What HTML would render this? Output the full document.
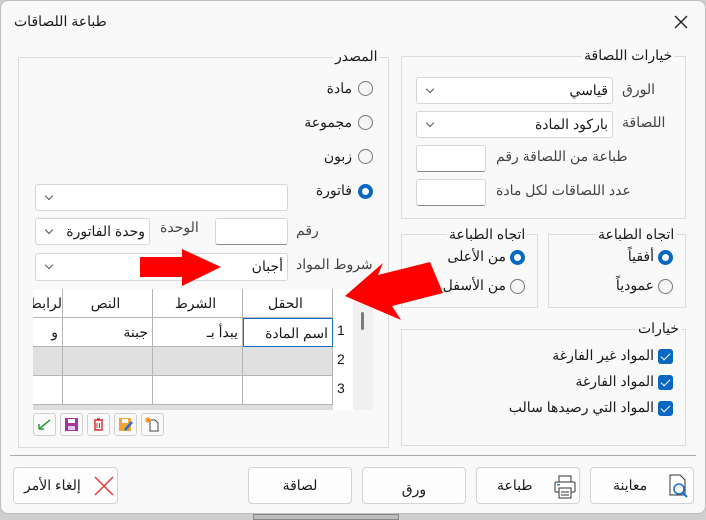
<!DOCTYPE html>
<html><head><meta charset="utf-8"><style>
*{box-sizing:border-box;margin:0;padding:0}
body{width:706px;height:520px;background:#cfcfcf;font-family:"Liberation Sans","Noto Sans CJK SC",sans-serif;font-size:14px;color:#1a1a1a;position:relative;overflow:hidden}
.dlg{position:absolute;left:0;top:0;width:706px;height:514px;background:#f9f9f9;border:1px solid #bdbdbd;border-radius:8px}
.a{position:absolute}
.grp{position:absolute;border:1px solid #dcdcdc}
.lg{position:absolute;background:#f9f9f9;padding:0 2px;direction:rtl;white-space:nowrap}
.t{position:absolute;direction:rtl;white-space:nowrap}
.box{position:absolute;background:#fff;border:1px solid #d6d6d6;border-bottom:1px solid #8a8a8a;border-radius:3px}
.cmb{position:absolute;background:#fff;border:1px solid #d6d6d6;border-radius:3px;direction:rtl;padding-right:4px;line-height:24px}
.cmb:after{content:"";position:absolute;left:10px;top:8px;width:5px;height:5px;border-right:1px solid #555;border-bottom:1px solid #555;transform:rotate(45deg)}
.rd{position:absolute;width:15px;height:15px;border:1px solid #777;border-radius:50%;background:#f5f5f5}
.rd.on{border:4px solid #0867c0;background:#fff}
.cb{position:absolute;width:15px;height:15px;background:#0867c0;border-radius:3px}
.cb:after{content:"";position:absolute;left:5px;top:2px;width:4px;height:8px;border-right:1.5px solid #fff;border-bottom:1.5px solid #fff;transform:rotate(45deg)}
.btn{position:absolute;background:#fdfdfd;border:1px solid #d3d3d3;border-radius:4px;top:467px;height:37px;text-align:center;line-height:35px}
.cell{position:absolute;border-right:1px solid #b5b5b5;border-bottom:1px solid #b5b5b5;direction:rtl;padding-right:4px;line-height:28px;overflow:hidden;white-space:nowrap}
.tb{position:absolute;top:413px;width:23px;height:23px;border:1px solid #cfcfcf;border-radius:3px;background:#fafafa}
</style></head><body>
<div class="dlg"></div>
<div class="t" style="left:14px;top:13px;font-size:14px">طباعة اللصاقات</div>
<svg class="a" style="left:673px;top:14px" width="16" height="16"><path d="M2 2L14 14M14 2L2 14" stroke="#222" stroke-width="1.4"/></svg>

<!-- left group -->
<div class="grp" style="left:18px;top:57px;width:371px;height:391px"></div>
<div class="lg" style="left:333px;top:48px">المصدر</div>
<div class="rd" style="left:358px;top:81px"></div><div class="t" style="right:354px;top:80px">مادة</div>
<div class="rd" style="left:358px;top:115px"></div><div class="t" style="right:354px;top:114px">مجموعة</div>
<div class="rd" style="left:358px;top:149px"></div><div class="t" style="right:354px;top:148px">زبون</div>
<div class="rd on" style="left:358px;top:184px"></div><div class="t" style="right:354px;top:182px">فاتورة</div>
<div class="cmb" style="left:35px;top:184px;width:253px;height:27px"></div>
<div class="cmb" style="left:35px;top:218px;width:115px;height:27px">وحدة الفاتورة</div>
<div class="t" style="left:160px;top:219px;color:#444">الوحدة</div>
<div class="box" style="left:215px;top:218px;width:73px;height:27px"></div>
<div class="t" style="left:296px;top:222px;color:#444">رقم</div>
<div class="cmb" style="left:35px;top:253px;width:253px;height:28px">أجبان</div>
<div class="t" style="left:296px;top:256px;color:#444">شروط المواد</div>

<!-- grid -->
<div class="a" style="left:33px;top:289px;width:340px;height:121px;background:#fff;overflow:hidden">
 <div class="a" style="left:320px;top:0;width:20px;height:121px;background:#f0f0f0"></div>
 <div class="a" style="left:328px;top:23px;width:3px;height:18px;background:#7a7a7a;border-radius:2px"></div>
 <div class="cell" style="left:0;top:0;width:30px;height:29px;text-align:right;padding-right:0">لرابط</div>
 <div class="cell" style="left:30px;top:0;width:90px;height:29px;text-align:center">النص</div>
 <div class="cell" style="left:120px;top:0;width:90px;height:29px;text-align:center">الشرط</div>
 <div class="cell" style="left:210px;top:0;width:90px;height:29px;text-align:center">الحقل</div>
 <div class="cell" style="left:0;top:29px;width:30px;height:29px">و</div>
 <div class="cell" style="left:30px;top:29px;width:90px;height:29px">جبنة</div>
 <div class="cell" style="left:120px;top:29px;width:90px;height:29px">يبدأ بـ</div>
 <div class="cell" style="left:210px;top:29px;width:90px;height:29px;border:1px solid #1a6fc4">اسم المادة</div>
 <div class="a" style="left:0;top:58px;width:300px;height:29px;background:#e0e0e0"></div>
 <div class="cell" style="left:0;top:58px;width:30px;height:29px"></div><div class="cell" style="left:30px;top:58px;width:90px;height:29px"></div><div class="cell" style="left:120px;top:58px;width:90px;height:29px"></div><div class="cell" style="left:210px;top:58px;width:90px;height:29px"></div>
 <div class="cell" style="left:0;top:87px;width:30px;height:29px"></div><div class="cell" style="left:30px;top:87px;width:90px;height:29px"></div><div class="cell" style="left:120px;top:87px;width:90px;height:29px"></div><div class="cell" style="left:210px;top:87px;width:90px;height:29px"></div>
 <div class="a" style="left:0;top:116px;width:300px;height:5px;background:#ddd"></div>
 <div class="a" style="left:304px;top:33px">1</div><div class="a" style="left:304px;top:62px">2</div><div class="a" style="left:304px;top:91px">3</div>
</div>
<div class="tb" style="left:33px"><svg width="21" height="21"><path d="M5 15L16 6M5 15V10M5 15H10" stroke="#2e9b3e" stroke-width="1.5" fill="none"/></svg></div>
<div class="tb" style="left:60px"><svg width="21" height="21"><rect x="4" y="4" width="13" height="13" fill="#a1399b"/><rect x="7" y="5" width="7" height="4" fill="#fff"/><rect x="7" y="12" width="7" height="4" fill="#e9c7e7"/></svg></div>
<div class="tb" style="left:87px"><svg width="21" height="21"><path d="M6 6H15M9 5H12M7 7V16H14V7" stroke="#d42a2a" stroke-width="1.4" fill="none"/><path d="M9 9V14M11.5 9V14" stroke="#d42a2a"/></svg></div>
<div class="tb" style="left:114px"><svg width="21" height="21"><rect x="4" y="4" width="12" height="13" fill="#f1a338"/><rect x="7" y="5" width="6" height="4" fill="#fff"/><path d="M10 16L17 8" stroke="#2a6fc4" stroke-width="2.5"/></svg></div>
<div class="tb" style="left:141px"><svg width="21" height="21"><path d="M8 6H13L16 9V17H8Z" stroke="#444" fill="#fff"/><path d="M6 3V9M3 6H9M4 4L8 8M8 4L4 8" stroke="#f08a00"/></svg></div>

<!-- right groups -->
<div class="grp" style="left:401px;top:56px;width:285px;height:163px"></div>
<div class="lg" style="left:582px;top:47px">خيارات اللصاقة</div>
<div class="cmb" style="left:416px;top:77px;width:197px;height:27px">قياسي</div>
<div class="t" style="left:622px;top:81px;color:#444">الورق</div>
<div class="cmb" style="left:416px;top:111px;width:197px;height:27px">باركود المادة</div>
<div class="t" style="left:622px;top:114px;color:#444">اللصاقة</div>
<div class="box" style="left:416px;top:145px;width:70px;height:27px"></div>
<div class="t" style="left:496px;top:148px;color:#444">طباعة من اللصاقة رقم</div>
<div class="box" style="left:416px;top:179px;width:70px;height:27px"></div>
<div class="t" style="left:496px;top:182px;color:#444">عدد اللصاقات لكل مادة</div>

<div class="grp" style="left:548px;top:234px;width:138px;height:74px"></div>
<div class="lg" style="left:596px;top:226px">اتجاه الطباعة</div>
<div class="rd on" style="left:658px;top:250px"></div><div class="t" style="right:52px;top:248px">أفقياً</div>
<div class="rd" style="left:658px;top:279px"></div><div class="t" style="right:52px;top:277px">عمودياً</div>

<div class="grp" style="left:401px;top:234px;width:137px;height:74px"></div>
<div class="lg" style="left:447px;top:226px">اتجاه الطباعة</div>
<div class="rd on" style="left:510px;top:250px"></div><div class="t" style="right:200px;top:248px">من الأعلى</div>
<div class="rd" style="left:510px;top:279px"></div><div class="t" style="right:200px;top:277px">من الأسفل</div>

<div class="grp" style="left:401px;top:329px;width:285px;height:117px"></div>
<div class="lg" style="left:636px;top:320px">خيارات</div>
<div class="cb" style="left:658px;top:349px"></div><div class="t" style="right:52px;top:347px">المواد غير الفارغة</div>
<div class="cb" style="left:658px;top:375px"></div><div class="t" style="right:52px;top:373px">المواد الفارغة</div>
<div class="cb" style="left:658px;top:401px"></div><div class="t" style="right:52px;top:399px">المواد التي رصيدها سالب</div>

<!-- arrows -->
<svg class="a" style="left:0;top:0" width="706" height="520"><polygon points="140,257 182,257 182,249 221,267 182,286 182,277 140,277" fill="#f00"/><polygon points="345,296 383,263 378,275 430,262 443,293 392,306 401,320" fill="#f00"/></svg>

<div class="a" style="left:10px;top:455px;width:686px;height:1px;background:#a8a8a8"></div>
<div class="btn" style="left:13px;width:105px;text-align:left;padding-left:10px">إلغاء الأمر<svg class="a" style="left:80px;top:8px" width="20" height="20"><path d="M1 1L19 19M19 1L1 19" stroke="#e03c3c" stroke-width="1.5"/></svg></div>
<div class="btn" style="left:248px;width:104px">لصاقة</div>
<div class="btn" style="left:362px;width:104px;line-height:42px">ورق</div>
<div class="btn" style="left:476px;width:104px;text-align:left;padding-left:20px">طباعة<svg class="a" style="left:76px;top:7px" width="24" height="24"><rect x="6" y="1" width="12" height="6" fill="none" stroke="#333"/><rect x="2" y="7" width="20" height="10" rx="1" fill="none" stroke="#333"/><rect x="6" y="13" width="12" height="10" fill="#fff" stroke="#333"/><path d="M8 17H16M8 20H16" stroke="#333"/><rect x="4" y="9" width="3" height="1.5" fill="#2a7fd4"/></svg></div>
<div class="btn" style="left:590px;width:104px;text-align:left;padding-left:22px">معاينة<svg class="a" style="left:77px;top:6px" width="24" height="26"><path d="M2 1H12L17 6V21H2Z" fill="#fff" stroke="#333"/><circle cx="11" cy="15" r="5" fill="none" stroke="#1e6fcf" stroke-width="1.6"/><path d="M14.5 18.5L19 23" stroke="#1e6fcf" stroke-width="2"/></svg></div>
<div class="a" style="left:253px;top:514px;width:146px;height:6px;background:#bcbcbc;border:1px solid #888"></div>
</body></html>
